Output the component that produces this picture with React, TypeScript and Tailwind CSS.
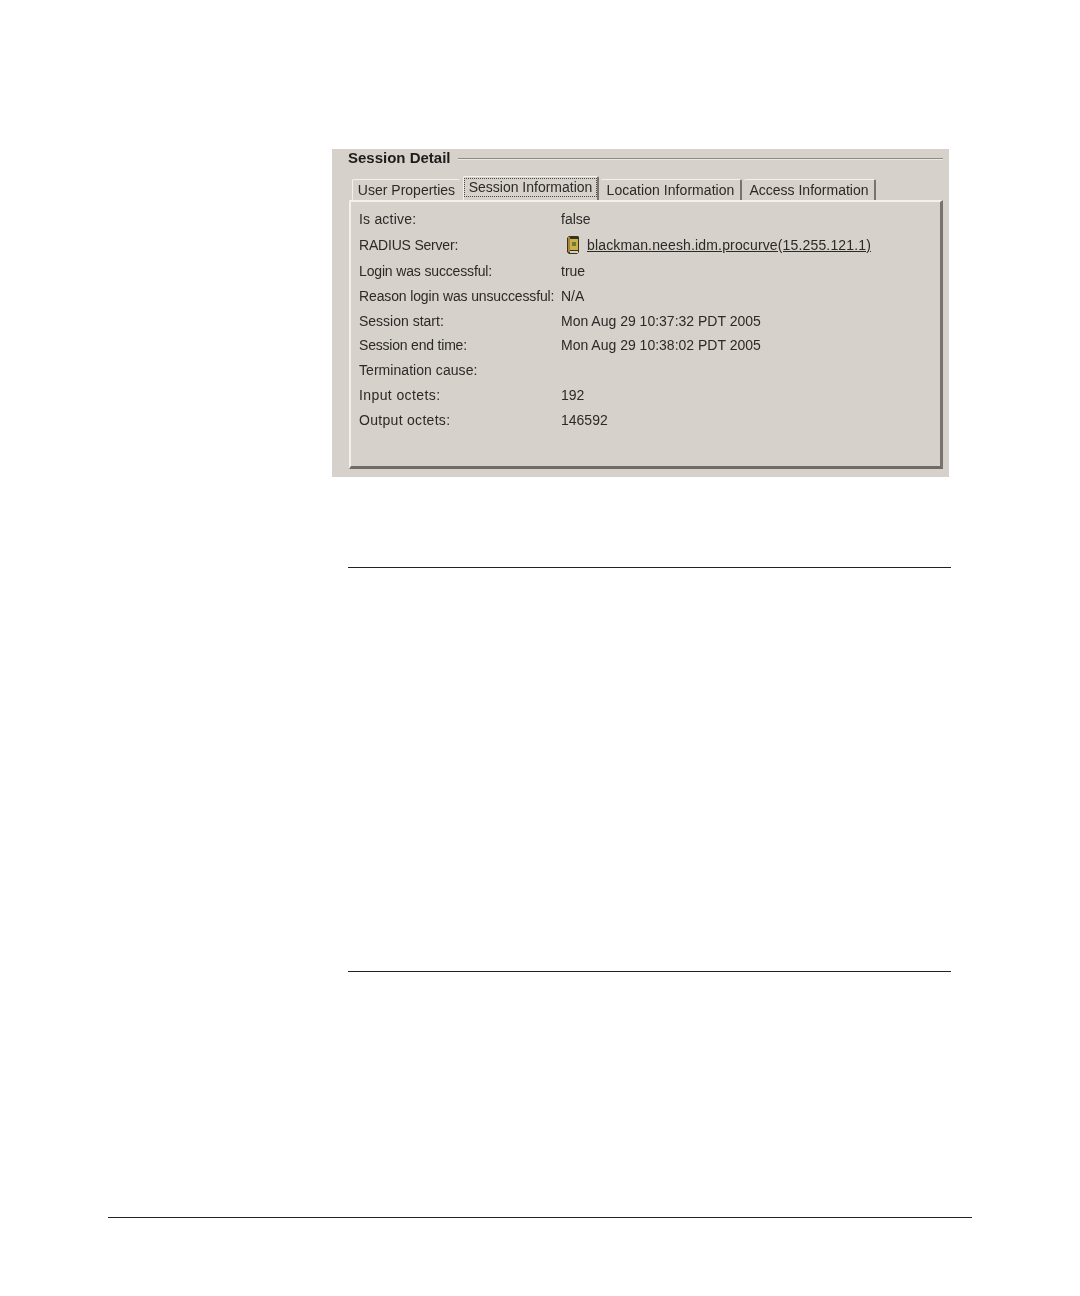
// label, value, row height, label tracking (hinted Tahoma in the original has uneven widths)
const rows: [string, string, string, string][] = [
  ['Is active:', 'false', 'h-[26px]', 'tracking-[0.2px]'],
  ['RADIUS Server:', '', 'h-[26px]', 'tracking-[-0.2px]'],
  ['Login was successful:', 'true', 'h-[26px]', 'tracking-[-0.15px]'],
  ['Reason login was unsuccessful:', 'N/A', 'h-[25px]', 'tracking-[-0.13px]'],
  ['Session start:', 'Mon Aug 29 10:37:32 PDT 2005', 'h-[24px]', ''],
  ['Session end time:', 'Mon Aug 29 10:38:02 PDT 2005', 'h-[25px]', 'tracking-[-0.2px]'],
  ['Termination cause:', '', 'h-[25px]', 'tracking-[0.05px]'],
  ['Input octets:', '192', 'h-[25px]', 'tracking-[0.4px]'],
  ['Output octets:', '146592', 'h-[25px]', 'tracking-[0.3px]'],
];

function ServerIcon() {
  return (
    <svg width="16" height="20" viewBox="0 0 16 20" className="shrink-0">
      <path d="M4 1h9l1 1v15l-2 2H4l-2-2V3z" fill="#3a3320" />
      <rect x="5" y="4" width="8" height="11" fill="#c9b04a" />
      <rect x="3" y="2" width="2" height="15" fill="#a8853a" />
      <rect x="7" y="7" width="4" height="4" fill="#6f7a2c" />
      <rect x="5" y="16" width="8" height="2" fill="#d8d0b8" />
    </svg>
  );
}

export default function App() {
  return (
    <div className="relative h-[1296px] w-[1080px] overflow-hidden bg-white font-['Liberation_Sans',sans-serif]">
      <div className="ml-[332px] pt-[149px]">
        {/* Session detail panel */}
        <div className="h-[328px] w-[617px] bg-[#d6d1ca] pl-[16px] pr-[6px] text-[14px] text-[#2c2a28] blur-[0.5px]">
          <div className="flex h-[19px] items-center gap-[7px]">
            <span className="text-[15px] font-bold text-[#1e1c1a]">Session Detail</span>
            <div className="h-[2px] flex-1 border-t border-[#8f8a84] bg-[#ece8e2]" />
          </div>
          <div className="mt-[8px] flex h-[24px] items-end whitespace-nowrap pl-[4px]">
            <div className="flex h-[21px] w-[108px] items-center justify-center rounded-t-[2px] border-l border-t border-[#f4f1ec]">
              User Properties
            </div>
            <div className="ml-[3px] flex h-[24px] w-[136px] items-center justify-center rounded-t-[2px] border-l border-r-2 border-t border-[#f4f1ec] border-r-[#77736e] pb-[2px]">
              <span className="border border-dotted border-[#4a4744] px-[4px] leading-[17px]">Session Information</span>
            </div>
            <div className="ml-[2px] flex h-[21px] w-[141px] items-center justify-center rounded-t-[2px] border-r-2 border-t border-[#f4f1ec] border-r-[#77736e] tracking-[0.05px]">
              Location Information
            </div>
            <div className="ml-[2px] flex h-[21px] w-[132px] items-center justify-center rounded-t-[2px] border-r-2 border-t border-[#f4f1ec] border-r-[#77736e]">
              Access Information
            </div>
          </div>
          <div className="ml-[1px] h-[269px] w-[594px] border-b-[3px] border-l-2 border-r-[3px] border-t-2 border-[#f4f1ec] border-b-[#6f6b66] border-r-[#77736e] pl-[8px] pt-[4px]">
            {rows.map(([label, value, height, tracking]) => (
              <div key={label} className={`flex items-center ${height}`}>
                <span className={`w-[202px] shrink-0 whitespace-nowrap ${tracking}`}>{label}</span>
                {label === 'RADIUS Server:' ? (
                  <span className="flex items-center gap-[6px] pl-[4px]">
                    <ServerIcon />
                    <span className="tracking-[0.15px] underline">blackman.neesh.idm.procurve(15.255.121.1)</span>
                  </span>
                ) : (
                  <span>{value}</span>
                )}
              </div>
            ))}
          </div>
        </div>
      </div>

      {/* Page rules */}
      <div className="ml-[348px] mt-[90px] h-[405px] w-[603px] border-y border-[#222]" />
      <div className="ml-[108px] mt-[245px] h-px w-[864px] bg-[#222]" />
    </div>
  );
}
